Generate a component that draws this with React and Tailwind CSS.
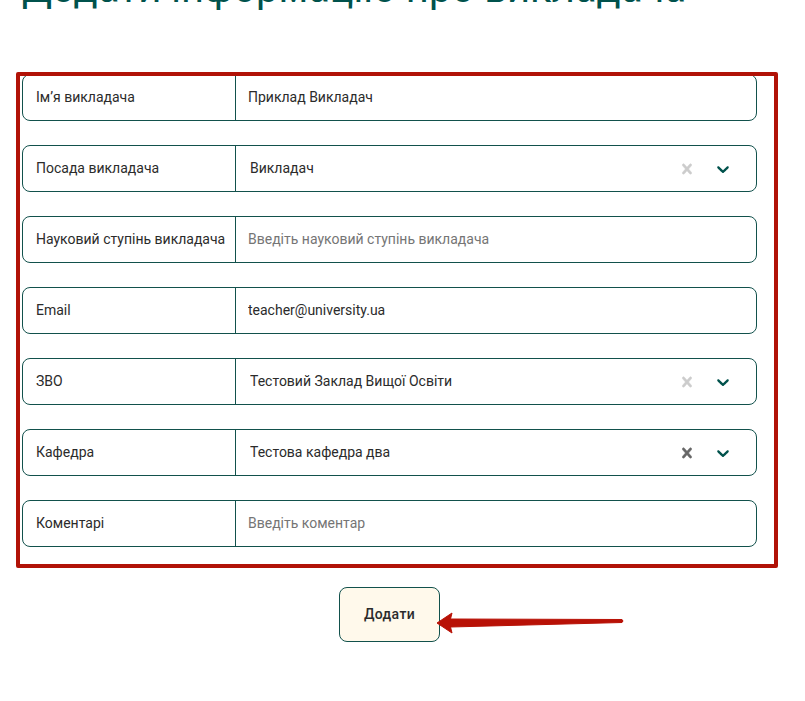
import { useState } from "react";

const FIELDS = [
  { id: "name", label: "Імʼя викладача", value: "Приклад Викладач", type: "text" },
  { id: "position", label: "Посада викладача", value: "Викладач", type: "select" },
  { id: "degree", label: "Науковий ступінь викладача", placeholder: "Введіть науковий ступінь викладача", type: "text" },
  { id: "email", label: "Email", value: "teacher@university.ua", type: "email" },
  { id: "institution", label: "ЗВО", value: "Тестовий Заклад Вищої Освіти", type: "select" },
  { id: "department", label: "Кафедра", value: "Тестова кафедра два", type: "select", active: true },
  { id: "comment", label: "Коментарі", placeholder: "Введіть коментар", type: "text" },
];

function CrossIcon() {
  return (
    <svg viewBox="0 0 20 20" className="size-5" fill="currentColor" stroke="currentColor" aria-hidden="true">
      <path d="M14.348 14.849c-0.469 0.469-1.229 0.469-1.697 0l-2.651-3.030-2.651 3.029c-0.469 0.469-1.229 0.469-1.697 0-0.469-0.469-0.469-1.229 0-1.697l2.758-3.15-2.759-3.152c-0.469-0.469-0.469-1.228 0-1.697s1.228-0.469 1.697 0l2.652 3.031 2.651-3.031c0.469-0.469 1.228-0.469 1.697 0s0.469 1.229 0 1.697l-2.758 3.152 2.758 3.15c0.469 0.469 0.469 1.229 0 1.698z" strokeWidth="0.5" />
    </svg>
  );
}

function ChevronIcon() {
  return (
    <svg viewBox="0 0 20 20" className="size-5" fill="currentColor" aria-hidden="true">
      <path d="M4.516 7.548c0.436-0.446 1.043-0.481 1.576 0l3.908 3.747 3.908-3.747c0.533-0.481 1.141-0.446 1.574 0 0.436 0.445 0.408 1.197 0 1.615-0.406 0.418-4.695 4.502-4.695 4.502-0.217 0.223-0.502 0.335-0.787 0.335s-0.57-0.112-0.789-0.335c0 0-4.287-4.084-4.695-4.502s-0.436-1.17 0-1.615z" />
    </svg>
  );
}

function SelectControl({ field }) {
  const [value, setValue] = useState(field.value);
  return (
    <div className="relative flex min-w-0 flex-1">
      <select
        id={field.id}
        value={value}
        onChange={(e) => setValue(e.target.value)}
        className="w-full appearance-none bg-transparent pb-0.5 pl-3.5 pr-24 outline-none"
      >
        <option value=""></option>
        <option value={field.value}>{field.value}</option>
      </select>
      <div className="pointer-events-none absolute inset-y-0 right-[23px] flex items-center gap-4">
        <button
          type="button"
          aria-label="Очистити"
          onClick={() => setValue("")}
          className={field.active ? "pointer-events-auto text-[#666666]" : "pointer-events-auto text-[#cccccc]"}
        >
          <CrossIcon />
        </button>
        <span className="text-[#00524c]">
          <ChevronIcon />
        </span>
      </div>
    </div>
  );
}

function Field({ field }) {
  return (
    <div className="flex h-[47px] rounded-lg border border-[#12514c]">
      <label htmlFor={field.id} className="flex w-[213px] shrink-0 items-center whitespace-nowrap border-r border-[#12514c] pb-0.5 pl-[13px]">
        {field.label}
      </label>
      {field.type === "select" ? (
        <SelectControl field={field} />
      ) : (
        <input
          id={field.id}
          type={field.type}
          defaultValue={field.value}
          placeholder={field.placeholder}
          className="min-w-0 flex-1 bg-transparent px-3 pb-0.5 outline-none placeholder:text-[#757575]"
        />
      )}
    </div>
  );
}

export default function App() {
  return (
    <main className="min-h-screen overflow-hidden bg-white pl-[22px] pr-12 font-['Roboto',sans-serif] text-sm text-[#2b2b2b]">
      <h1 className="-mt-9 whitespace-nowrap text-[40px] leading-[50px] text-[#00524c]">
        Додати інформацію про викладача
      </h1>
      <form className="mt-[60px]" onSubmit={(e) => e.preventDefault()}>
        <div className="relative">
          <div className="flex flex-col gap-6">
            {FIELDS.map((field) => (
              <Field key={field.id} field={field} />
            ))}
          </div>
          <div className="pointer-events-none absolute -bottom-[21px] -left-1.5 -right-[21px] -top-0.5 rounded-xs border-4 border-[#b11207]" />
        </div>
        <div className="mt-10 flex justify-center">
          <div className="relative">
            <button type="submit" className="h-[55px] rounded-lg border border-[#12514c] bg-[#fff9eb] px-6 pb-0.5 font-medium tracking-wide">
              Додати
            </button>
            <svg viewBox="0 0 188 24" className="pointer-events-none absolute left-[97px] top-6 h-6 w-[188px]" aria-hidden="true">
              <path d="M1 12 16 2 14.500 8 186 8.500Q188 10 186 11.500L14.500 16 16 22Z" fill="#b81106" stroke="#b81106" strokeLinejoin="round" />
            </svg>
          </div>
        </div>
      </form>
    </main>
  );
}
